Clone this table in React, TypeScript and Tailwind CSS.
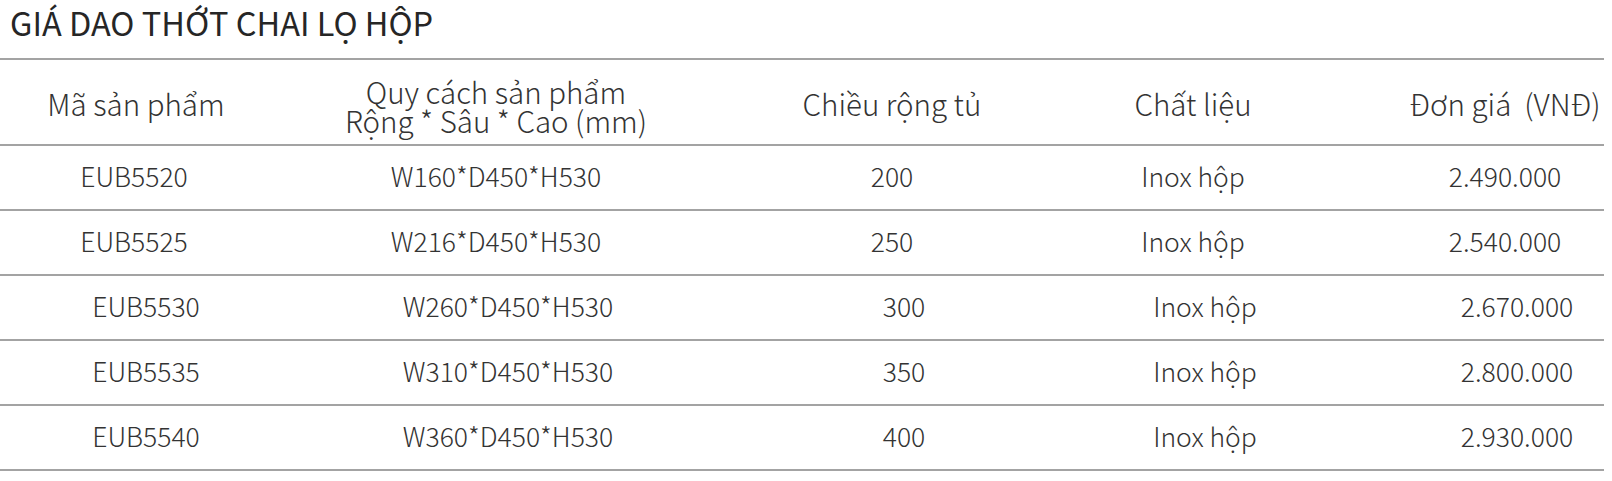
const rows = [
  { code: "EUB5520", size: "W160*D450*H530", width: "200", material: "Inox hộp", price: "2.490.000" },
  { code: "EUB5525", size: "W216*D450*H530", width: "250", material: "Inox hộp", price: "2.540.000" },
  { code: "EUB5530", size: "W260*D450*H530", width: "300", material: "Inox hộp", price: "2.670.000" },
  { code: "EUB5535", size: "W310*D450*H530", width: "350", material: "Inox hộp", price: "2.800.000" },
  { code: "EUB5540", size: "W360*D450*H530", width: "400", material: "Inox hộp", price: "2.930.000" },
];

const font = { fontFamily: '"Noto Sans CJK SC", "Noto Sans", sans-serif' };

export default function App() {
  return (
    <div className="w-[1612px] h-[481px] bg-white overflow-hidden" style={font}>
      <div className="w-[1604px]">
        {/* Title */}
        <div className="h-[60px] border-b-2 border-[#a3a3a3] pl-[10px] pt-[5px]">
          <h1 className="text-[32.5px] leading-[34px] font-normal text-[#262626]">GIÁ DAO THỚT CHAI LỌ HỘP</h1>
        </div>

        {/* Header */}
        <div className="grid grid-cols-[268px_456px_336px_266px_278px] h-[86px] border-b-2 border-[#a3a3a3] items-center text-[29.5px] leading-[34px] font-extralight text-[#333333]">
          <div className="text-center pt-[2px] pl-[4px]">Mã sản phẩm</div>
          <div className="text-center pt-[7px] leading-[29px]">
            <div>Quy cách sản phẩm</div>
            <div>Rộng * Sâu * Cao (mm)</div>
          </div>
          <div className="text-center pt-[2px]">Chiều rộng tủ</div>
          <div className="text-center pt-[2px]">Chất liệu</div>
          <div className="text-center pt-[2px] pl-[80px] whitespace-pre">Đơn giá  (VNĐ)</div>
        </div>

        {/* Rows */}
        {rows.map((r, i) => (
          <div
            key={r.code}
            className={
              i < 2
                ? "grid grid-cols-[268px_456px_336px_266px_278px] h-[65px] pb-[4px] border-b-2 border-[#a3a3a3] items-center text-[26.5px] leading-[34px] font-extralight text-[#333333]"
                : "grid grid-cols-[268px_456px_336px_266px_278px] h-[65px] pb-[4px] pl-[12px] border-b-2 border-[#a3a3a3] items-center text-[26.5px] leading-[34px] font-extralight text-[#333333]"
            }
          >
            <div className="text-center">{r.code}</div>
            <div className="text-center">{r.size}</div>
            <div className="text-center">{r.width}</div>
            <div className="text-center">{r.material}</div>
            <div className="text-center pl-[80px]">{r.price}</div>
          </div>
        ))}
      </div>
    </div>
  );
}
